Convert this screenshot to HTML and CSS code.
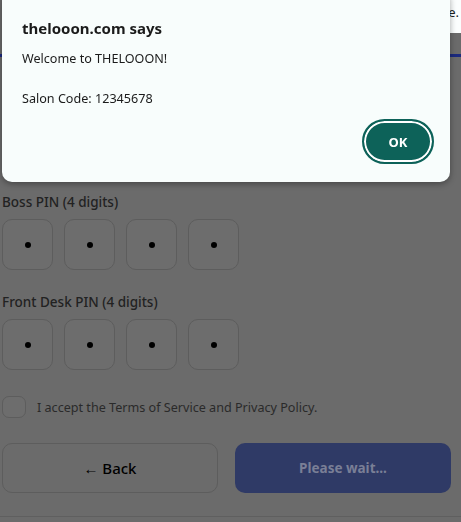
FILE: index.html
```html
<!DOCTYPE html>
<html lang="en">
<head>
  <meta charset="UTF-8" />
  <meta name="viewport" content="width=device-width, initial-scale=1.0" />
  <title>THELOOON - Create Salon</title>
  <link rel="stylesheet" href="styles.css">
</head>
<body>

  <!-- Saved code notice -->
  <div class="notice"><span>Keep your code safe.</span></div>

  <!-- Signup form (dimmed behind the alert) -->
  <div class="page">
    <div class="progress"></div>

    <section class="pin-group">
      <label class="pin-label">Boss PIN (4 digits)</label>
      <div class="pin-row">
        <div class="pin-box"><span class="dot"></span></div>
        <div class="pin-box"><span class="dot"></span></div>
        <div class="pin-box"><span class="dot"></span></div>
        <div class="pin-box"><span class="dot"></span></div>
      </div>
    </section>

    <section class="pin-group">
      <label class="pin-label">Front Desk PIN (4 digits)</label>
      <div class="pin-row">
        <div class="pin-box"><span class="dot"></span></div>
        <div class="pin-box"><span class="dot"></span></div>
        <div class="pin-box"><span class="dot"></span></div>
        <div class="pin-box"><span class="dot"></span></div>
      </div>
    </section>

    <div class="terms">
      <span class="check"></span>
      I accept the Terms of Service and Privacy Policy.
    </div>

    <div class="actions">
      <button class="btn-back">← Back</button>
      <button class="btn-submit" disabled>Please wait...</button>
    </div>

    <div class="footer-line"></div>
  </div>

  <!-- Browser alert -->
  <div class="alert">
    <h2>thelooon.com says</h2>
    <p>Welcome to THELOOON!<br><br>Salon Code: 12345678</p>
    <div class="alert-actions">
      <button class="ok-btn">OK</button>
    </div>
  </div>

</body>
</html>
```

FILE: styles.css
```css
* {
  box-sizing: border-box;
}
body {
  margin: 0;
  font-family: 'Noto Sans', 'Open Sans', sans-serif;
  background-color: #6b6b6b;
  color: #262626;
}
/* only the tail of the notice peeks out beside the alert */
.notice {
  position: fixed;
  top: 0;
  left: 450px;
  right: 0;
  height: 33px;
  display: flex;
  justify-content: flex-end;
  background: #fbfefe;
  color: #222;
  font-size: 13px;
  line-height: 25px;
  padding-right: 2px;
  white-space: nowrap;
  overflow: hidden;
}
.page {
  padding: 0 10px 0 2px;
}
.progress {
  height: 3px;
  margin: 54px -10px 0 -2px;
  background: #1c2a7e;
}
.pin-group {
  margin-top: 135px;
}
.pin-group + .pin-group {
  margin-top: 22px;
}
.pin-label {
  display: block;
  font-size: 13.5px;
  font-weight: 500;
  line-height: 20px;
  margin-bottom: 7px;
  color: #222;
}
.pin-row {
  display: flex;
  gap: 11px;
}
.pin-box {
  width: 51px;
  height: 51px;
  border: 1px solid #5d5d5d;
  border-radius: 10px;
  background: #6d6d6d;
  display: flex;
  align-items: center;
  justify-content: center;
}
.dot {
  width: 6px;
  height: 6px;
  border-radius: 50%;
  background: #000;
}
.terms {
  display: flex;
  align-items: center;
  gap: 11px;
  margin-top: 26px;
  font-size: 12.6px;
  color: #2a2a2a;
}
.check {
  width: 24px;
  height: 22px;
  border: 1px solid #5d5d5d;
  border-radius: 7px;
  background: #6d6d6d;
}
.actions {
  display: grid;
  grid-template-columns: 1fr 1fr;
  gap: 17px;
  margin-top: 25px;
}
.actions button {
  height: 50px;
  border-radius: 10px;
  font-family: inherit;
}
.btn-back {
  border: 1px solid #5d5d5d;
  background: #6b6b6b;
  color: #000;
  font-size: 15px;
  font-weight: 500;
}
.btn-submit {
  border: none;
  background: #2f3a66;
  color: #7a7f96;
  font-size: 13.5px;
  font-weight: 700;
}
.footer-line {
  height: 1px;
  margin: 23px -10px 0 -2px;
  background: #5f5f5f;
}
.alert {
  position: fixed;
  top: -10px;
  left: 2px;
  width: 448px;
  height: 192px;
  padding: 27px 20px 0;
  background: #f8fdfc;
  border-radius: 10px;
  box-shadow: 0 2px 6px rgba(0, 0, 0, 0.35);
  color: #1b1b1b;
}
.alert h2 {
  margin: 0;
  font-size: 15px;
  font-weight: 700;
  line-height: 22px;
}
.alert p {
  margin: 10px 0 0;
  font-size: 12.6px;
  line-height: 20px;
}
.alert-actions {
  display: flex;
  justify-content: flex-end;
  margin-top: 10px;
  margin-right: -4px;
}
.ok-btn {
  width: 72px;
  height: 45px;
  border-radius: 23px;
  border: 2px solid #0d6259;
  box-shadow: inset 0 0 0 2px #fff;
  background: #0d6259;
  color: #fff;
  font-family: inherit;
  font-size: 13px;
  font-weight: 700;
}
```
